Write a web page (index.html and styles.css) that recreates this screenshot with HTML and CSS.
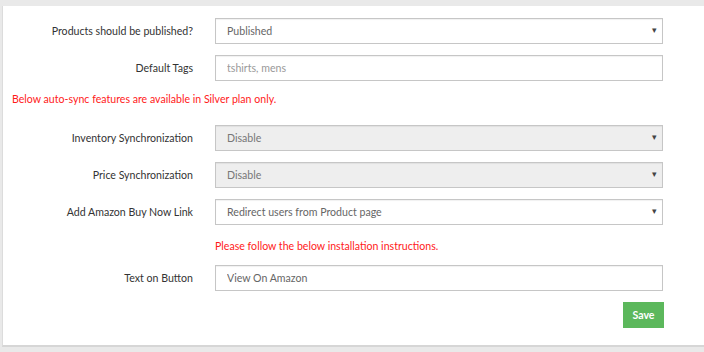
FILE: index.html
```html
<!DOCTYPE html>
<html lang="en">
<head>
    <meta charset="UTF-8">
    <title>Settings</title>
    <link rel="stylesheet" href="styles.css">
</head>
<body>

<div class="panel">
    <form class="settings">

        <div class="row">
            <label class="label">Products should be published?</label>
            <div class="select-box">
                <select class="control">
                    <option>Published</option>
                </select>
            </div>
        </div>

        <div class="row">
            <label class="label">Default Tags</label>
            <input class="control" type="text" placeholder="tshirts, mens">
        </div>

        <p class="warning">Below auto-sync features are available in Silver plan only.</p>

        <div class="row">
            <label class="label">Inventory Synchronization</label>
            <div class="select-box">
                <select class="control" disabled>
                    <option>Disable</option>
                </select>
            </div>
        </div>

        <div class="row">
            <label class="label">Price Synchronization</label>
            <div class="select-box">
                <select class="control" disabled>
                    <option>Disable</option>
                </select>
            </div>
        </div>

        <div class="row">
            <label class="label">Add Amazon Buy Now Link</label>
            <div class="select-box">
                <select class="control">
                    <option>Redirect users from Product page</option>
                </select>
            </div>
        </div>

        <p class="warning indent">Please follow the below installation instructions.</p>

        <div class="row">
            <label class="label">Text on Button</label>
            <input class="control" type="text" value="View On Amazon">
        </div>

        <div class="actions">
            <button type="button" class="save">Save</button>
        </div>

    </form>
</div>

</body>
</html>
```

FILE: styles.css
```css
body {
    margin: 0;
    background: #e9e9e9;
    font-family: Lato, "Open Sans", sans-serif;
    font-size: 10.6px;
}

.panel {
    margin: 6px 0 0 2px;
    height: 341px;
    box-sizing: border-box;
    background: #fff;
    border-left: 1px solid #dcdcdc;
    border-bottom: 2px solid #d6d6d6;
}

.settings {
    padding-top: 12px;
    width: 661px;
}

.row {
    display: flex;
    align-items: center;
    margin-bottom: 11px;
}

.label {
    flex: 0 0 190px;
    text-align: right;
    margin-right: 22px;
    color: #333;
}

.control {
    box-sizing: border-box;
    width: 448px;
    height: 26px;
    margin: 0;
    padding: 0 11px;
    border: 1px solid #c6c6c6;
    border-radius: 0;
    box-shadow: inset 0 1px 1px rgba(0, 0, 0, 0.06);
    background: #fff;
    font-family: inherit;
    font-size: 10.6px;
    color: #666;
    outline: none;
}

.control::placeholder {
    color: #999;
}

select.control {
    appearance: none;
    -webkit-appearance: none;
    opacity: 1;
}

select.control:disabled {
    background: #eee;
    color: #777;
}

.select-box {
    position: relative;
}

.select-box::after {
    content: "\25BE";
    position: absolute;
    right: 6px;
    top: 6px;
    font-size: 9px;
    color: #444;
    pointer-events: none;
}

.warning {
    margin: -1px 0 18px 9px;
    color: #ff1a1a;
    line-height: 16px;
}

.indent {
    margin: 13px 0 11px 212px;
}

.actions {
    display: flex;
    justify-content: flex-end;
}

.save {
    width: 41px;
    height: 26px;
    border: 0;
    background: #5cb85c;
    color: #fff;
    font-family: inherit;
    font-size: 10.6px;
    font-weight: bold;
    padding: 0;
}
```
